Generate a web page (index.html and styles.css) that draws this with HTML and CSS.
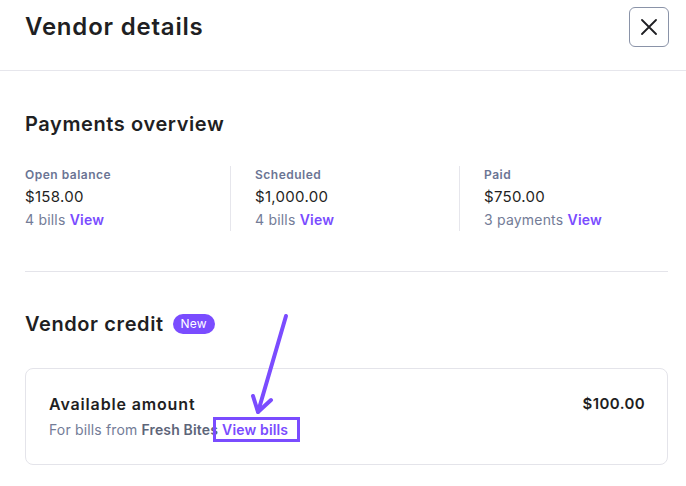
FILE: index.html
```html
<!DOCTYPE html>
<html lang="en">
<head>
<meta charset="utf-8">
<title>Vendor details</title>
<link rel="stylesheet" href="styles.css">
</head>
<body>
<div class="page">
  <header class="header">
    <h1 class="title">Vendor details</h1>
    <button class="close" aria-label="Close">
      <svg width="16" height="16" viewBox="0 0 16 16" fill="none" stroke="#1f1f23" stroke-width="1.8" stroke-linecap="round"><path d="M1 1L15 15M15 1L1 15"/></svg>
    </button>
  </header>

  <main class="content">
    <section class="overview">
      <h2 class="section-title">Payments overview</h2>
      <div class="stats">
        <div class="stat">
          <div class="stat-label">Open balance</div>
          <div class="stat-amount">$158.00</div>
          <div class="stat-meta">4 bills <a class="link">View</a></div>
        </div>
        <div class="stat stat-divided">
          <div class="stat-label">Scheduled</div>
          <div class="stat-amount">$1,000.00</div>
          <div class="stat-meta">4 bills <a class="link">View</a></div>
        </div>
        <div class="stat stat-divided">
          <div class="stat-label">Paid</div>
          <div class="stat-amount">$750.00</div>
          <div class="stat-meta">3 payments <a class="link">View</a></div>
        </div>
      </div>
    </section>

    <section class="credit">
      <h2 class="section-title">Vendor credit <span class="badge">New</span></h2>
      <div class="card">
        <div class="card-main">
          <div class="card-title">Available amount</div>
          <div class="card-sub">For bills from <strong class="vendor">Fresh Bites</strong> <a class="link highlight">View bills</a></div>
        </div>
        <div class="card-amount">$100.00</div>
      </div>
    </section>
  </main>

  <svg class="annotation" width="686" height="486" viewBox="0 0 686 486" fill="none" stroke="#7b4cff" stroke-width="4" stroke-linecap="round" stroke-linejoin="round">
    <path d="M286 316L258 412"/>
    <path d="M253 396L258 412L271 400"/>
  </svg>
</div>
</body>
</html>
```

FILE: styles.css
```css
* { box-sizing: border-box; }

html, body {
  margin: 0;
  background: #ffffff;
}

body {
  font-family: "Inter", "Noto Sans", sans-serif;
  color: #1f1f23;
}

.page {
  position: relative;
  width: 686px;
  height: 486px;
  overflow: hidden;
}

.header {
  height: 71px;
  display: flex;
  justify-content: space-between;
  align-items: flex-start;
  padding: 7px 17px 0 25px;
  border-bottom: 1px solid #e6e6ec;
}

.title {
  margin: 0;
  font-size: 24px;
  line-height: 40px;
  font-weight: 600;
  letter-spacing: 0.8px;
}

.close {
  width: 40px;
  height: 40px;
  border: 1px solid #8a93a8;
  border-radius: 6px;
  background: #fff;
  display: flex;
  align-items: center;
  justify-content: center;
  padding: 0;
}

.content {
  padding: 39px 18px 0 25px;
}

.section-title {
  margin: 0;
  font-size: 20px;
  line-height: 28px;
  font-weight: 600;
  letter-spacing: 0.6px;
  display: flex;
  align-items: center;
  gap: 9px;
}

.stats {
  display: grid;
  grid-template-columns: 205px 229px 1fr;
  margin-top: 28px;
  padding-bottom: 40px;
  border-bottom: 1px solid #e4e4ea;
}

.stat-divided {
  border-left: 1px solid #e6e6ec;
  padding-left: 24px;
}

.stat-label {
  font-size: 12px;
  line-height: 18px;
  font-weight: 600;
  letter-spacing: 0.5px;
  color: #6b7594;
}

.stat-amount {
  font-size: 15px;
  line-height: 24px;
  padding-top: 1px;
  letter-spacing: 0.3px;
  color: #1f1f23;
}

.stat-meta {
  font-size: 14px;
  line-height: 22px;
  letter-spacing: 0.2px;
  color: #737c97;
}

.link {
  color: #7a4cff;
  font-weight: 600;
}

.credit {
  padding-top: 38px;
}

.badge {
  display: inline-flex;
  align-items: center;
  justify-content: center;
  width: 42px;
  height: 20px;
  border-radius: 10px;
  background: #7a4cff;
  color: #fff;
  font-size: 12px;
  font-weight: 400;
  letter-spacing: 0.3px;
}

.card {
  margin-top: 30px;
  border: 1px solid #e4e4ea;
  border-radius: 8px;
  padding: 24px 22px 23px 23px;
  display: flex;
  justify-content: space-between;
  align-items: flex-start;
}

.card-title {
  font-size: 16px;
  line-height: 22px;
  font-weight: 600;
  letter-spacing: 0.85px;
}

.card-sub {
  margin-top: 4px;
  font-size: 14px;
  line-height: 22px;
  letter-spacing: 0.15px;
  color: #737c97;
}

.vendor {
  font-weight: 600;
  color: #5d6579;
}

.highlight {
  position: relative;
}

.highlight::after {
  content: "";
  position: absolute;
  left: -9px;
  right: -12px;
  top: -4px;
  bottom: -4px;
  border: 3px solid #7a4cff;
}

.card-amount {
  font-size: 15px;
  line-height: 22px;
  font-weight: 600;
  letter-spacing: 0.4px;
}

.annotation {
  position: absolute;
  left: 0;
  top: 0;
  pointer-events: none;
}
```
